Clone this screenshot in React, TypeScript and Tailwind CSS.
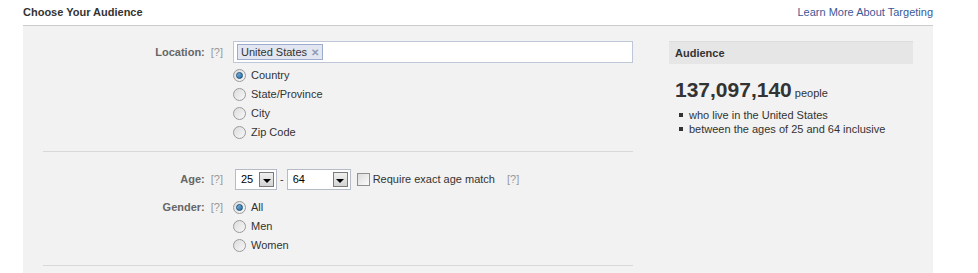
const font = { fontFamily: "'Liberation Sans', Arial, sans-serif" };

function Radio({ checked }: { checked?: boolean }) {
  return (
    <span className="flex h-[13px] w-[13px] shrink-0 items-center justify-center rounded-full border border-[#9a9a9a] bg-gradient-to-br from-[#dcdcdc] to-[#f8f8f8]">
      {checked && (
        <span className="h-[7px] w-[7px] rounded-full border border-[#1a4f78] bg-gradient-to-br from-[#7fb8e3] to-[#1d6aa5]" />
      )}
    </span>
  );
}

function RadioList({ items, checked }: { items: string[]; checked: number }) {
  return (
    <div className="flex flex-col gap-[6px]">
      {items.map((label, i) => (
        <label key={label} className="flex h-[13px] items-center gap-[5px] text-[11px] text-[#333]">
          <Radio checked={i === checked} />
          <span>{label}</span>
        </label>
      ))}
    </div>
  );
}

function Help() {
  return <span className="ml-[6px] font-normal text-[#999]">[?]</span>;
}

function Select({ value, width }: { value: string; width: string }) {
  return (
    <div className={`flex h-[21px] ${width} items-center justify-between border border-[#b5bcc7] bg-white pl-[5px] pr-[2px] text-[11px] text-black`}>
      <span>{value}</span>
      <span className="flex h-[15px] w-[15px] items-center justify-center border border-[#7a7a7a] bg-gradient-to-b from-[#f0f0f0] to-[#d4d4d4]">
        <span className="mt-[2px] h-0 w-0 border-x-[4px] border-t-[4px] border-x-transparent border-t-black" />
      </span>
    </div>
  );
}

export default function App() {
  return (
    <div className="h-[273px] w-[978px] bg-white pl-[23px] pr-[45px]" style={font}>
      <div className="flex h-[26px] items-center justify-between border-b border-[#cccccc] pb-[1px]">
        <h2 className="text-[11px] font-bold text-[#333]">Choose Your Audience</h2>
        <a className="text-[11px] text-[#3b5998]" href="#">
          Learn More About Targeting
        </a>
      </div>

      <div className="flex h-[247px] bg-[#f2f2f2]">
        <div className="ml-[20px] w-[590px] pt-[15px]">
          <div className="flex gap-[10px]">
            <div className="flex h-[22px] w-[180px] items-center justify-end text-[11px] font-bold text-[#666]">
              Location:
              <Help />
            </div>
            <div className="flex flex-col gap-[6px]">
              <div className="flex h-[22px] w-[400px] items-center border border-[#bdc7d8] bg-white px-[3px]">
                <span className="flex h-[16px] items-center gap-[4px] border border-[#9daccc] bg-[#e2e6f0] px-[3px] text-[11px] text-[#333]">
                  United States
                  <span className="text-[10px] font-bold text-[#8e9bb8]">✕</span>
                </span>
              </div>
              <RadioList items={["Country", "State/Province", "City", "Zip Code"]} checked={0} />
            </div>
          </div>

          <div className="mb-[17px] mt-[12px] border-t border-[#d8d8d8]" />

          <div className="flex gap-[10px]">
            <div className="flex h-[21px] w-[180px] items-center justify-end text-[11px] font-bold text-[#666]">
              Age:
              <Help />
            </div>
            <div className="flex h-[21px] items-center pl-[2px] text-[11px] text-[#333]">
              <Select value="25" width="w-[42px]" />
              <span className="px-[3px]">-</span>
              <Select value="64" width="w-[64px]" />
              <span className="ml-[6px] h-[13px] w-[13px] border border-[#8f8f8f] bg-gradient-to-br from-[#dcdcdc] to-[#fbfbfb]" />
              <span className="ml-[3px]">Require exact age match</span>
              <span className="ml-[12px] text-[#999]">[?]</span>
            </div>
          </div>

          <div className="mt-[11px] flex gap-[10px]">
            <div className="flex h-[13px] w-[180px] items-center justify-end text-[11px] font-bold text-[#666]">
              Gender:
              <Help />
            </div>
            <RadioList items={["All", "Men", "Women"]} checked={0} />
          </div>

          <div className="mt-[13px] border-t border-[#d8d8d8]" />
        </div>

        <div className="ml-[36px] w-[244px] pt-[15px]">
          <div className="flex h-[23px] items-center border-t border-[#dddddd] bg-[#e6e6e6] px-[6px] text-[11px] font-bold text-[#333]">
            Audience
          </div>
          <div className="mt-[14px] flex items-baseline gap-[3px] px-[6px] text-[#333]">
            <span className="text-[21px] font-bold leading-[24px]">137,097,140</span>
            <span className="text-[11px]">people</span>
          </div>
          <ul className="mt-[6px] px-[10px] text-[11px] leading-[14px] text-[#333]">
            <li className="flex items-center gap-[6px]">
              <span className="h-[4px] w-[4px] bg-[#333]" />
              who live in the United States
            </li>
            <li className="flex items-center gap-[6px]">
              <span className="h-[4px] w-[4px] bg-[#333]" />
              between the ages of 25 and 64 inclusive
            </li>
          </ul>
        </div>
      </div>
    </div>
  );
}
